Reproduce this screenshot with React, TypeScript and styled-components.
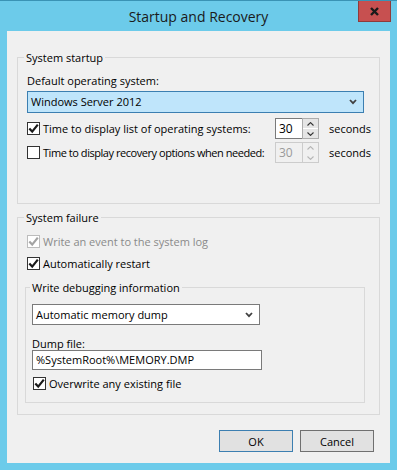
import React from 'react';
import styled, { createGlobalStyle } from 'styled-components';

const Global = createGlobalStyle`
  html, body { margin: 0; padding: 0; background: #6ccbea; }
  body {
    width: 397px; height: 470px; overflow: hidden;
    font-family: "Open Sans", "Noto Sans", sans-serif;
    font-size: 11px; color: #000;
  }
  * { box-sizing: border-box; }
`;

const Window = styled.div`
  width: 397px;
  height: 470px;
  background: #6ccbea;
  border-top: 1px solid #3a93b5;
  display: flex;
  flex-direction: column;
`;

const TitleBar = styled.div`
  height: 30px;
  display: grid;
  grid-template-columns: 1fr auto 1fr;
`;

const Title = styled.div`
  grid-column: 2;
  align-self: center;
  font-size: 14px;
  color: #1a1a1a;
  padding-top: 1px;
`;

const CloseButton = styled.div`
  grid-column: 3;
  justify-self: end;
  align-self: start;
  width: 33px;
  height: 21px;
  margin-right: 6px;
  background: #c75050;
  border: 1px solid #8f3b3b;
  border-top: none;
  display: flex;
  align-items: center;
  justify-content: center;
`;

const Client = styled.div`
  flex: 1;
  margin: 0 7px 7px 7px;
  background: #f0f0f0;
  padding: 19px 10px 0 10px;
  display: flex;
  flex-direction: column;
`;

const Group = styled.fieldset<{ $pad: string; $mt?: number; $stretch?: boolean }>`
  margin: ${p => p.$mt ?? 0}px 0 0 0;
  border: 1px solid #d9d9d9;
  padding: ${p => p.$pad};
  min-width: 0;
  display: flex;
  flex-direction: column;
  align-items: flex-start;
  ${p => (p.$stretch ? 'align-self: stretch;' : '')}
`;

const Legend = styled.legend<{ $ml: number }>`
  padding: 0 2px;
  margin-left: ${p => p.$ml}px;
  line-height: 15px;
  font-size: 11px;
`;

const FieldLabel = styled.div<{ $mt: number; $lh: number }>`
  margin-top: ${p => p.$mt}px;
  line-height: ${p => p.$lh}px;
`;

const Combo = styled.div<{ $focus?: boolean; $w: number; $h: number; $mt: number }>`
  margin-top: ${p => p.$mt}px;
  width: ${p => p.$w}px;
  height: ${p => p.$h}px;
  background: ${p => (p.$focus ? '#bfe5fb' : '#ffffff')};
  border: 1px solid ${p => (p.$focus ? '#3c7fb1' : '#7a7a7a')};
  display: flex;
  align-items: center;
  justify-content: space-between;
  padding: 0 6px 0 3px;
  line-height: 16px;
`;

const CheckRow = styled.div<{ $mt?: number; $disabled?: boolean; $w?: number; $ml?: number }>`
  margin-top: ${p => p.$mt ?? 0}px;
  margin-left: ${p => p.$ml ?? 0}px;
  height: 17px;
  display: flex;
  align-items: center;
  gap: 3px;
  color: ${p => (p.$disabled ? '#8a8a8a' : '#000')};
  ${p => (p.$w ? `flex: 0 0 ${p.$w}px; min-width: 0;` : '')}
  white-space: nowrap;
`;

const CheckText = styled.span<{ $tight?: boolean }>`
  letter-spacing: ${p => (p.$tight ? '-0.45px' : 'normal')};
`;

const Box = styled.span<{ $disabled?: boolean }>`
  width: 13px;
  height: 13px;
  flex: 0 0 13px;
  background: #fff;
  border: 1px solid ${p => (p.$disabled ? '#bcbcbc' : '#333333')};
  display: flex;
  align-items: center;
  justify-content: center;
`;

const SpinRow = styled.div<{ $mt: number }>`
  margin-top: ${p => p.$mt}px;
  height: 21px;
  display: flex;
  align-items: center;
`;

const SpinInput = styled.div<{ $disabled?: boolean }>`
  width: 27px;
  height: 21px;
  background: ${p => (p.$disabled ? '#f0f0f0' : '#fff')};
  border: 1px solid ${p => (p.$disabled ? '#cccccc' : '#7a7a7a')};
  border-right: none;
  color: ${p => (p.$disabled ? '#9a9a9a' : '#000')};
  padding-left: 3px;
  line-height: 19px;
  font-size: 12px;
`;

const SpinButtons = styled.div<{ $disabled?: boolean }>`
  width: 17px;
  height: 21px;
  display: flex;
  flex-direction: column;
  border: 1px solid ${p => (p.$disabled ? '#cccccc' : '#acacac')};
  background: ${p => (p.$disabled ? '#f0f0f0' : '#fff')};
`;

const SpinHalf = styled.div<{ $disabled?: boolean; $top?: boolean }>`
  flex: 1;
  margin: ${p => (p.$top ? '0 0 1px 0' : '0')};
  background: ${p => (p.$disabled ? '#f0f0f0' : '#e5e5e5')};
  display: flex;
  align-items: center;
  justify-content: center;
`;

const Seconds = styled.span`
  margin-left: 10px;
`;

const TextBox = styled.div<{ $w: number; $h: number }>`
  width: ${p => p.$w}px;
  height: ${p => p.$h}px;
  background: #fff;
  border: 1px solid #7a7a7a;
  padding-left: 3px;
  line-height: 18px;
`;

const ButtonBar = styled.div`
  margin-top: 15px;
  padding-right: 6px;
  display: flex;
  justify-content: flex-end;
  gap: 7px;
`;

const Button = styled.div<{ $default?: boolean }>`
  width: 74px;
  height: 22px;
  background: #e1e1e1;
  border: 1px solid ${p => (p.$default ? '#3c7fb1' : '#707070')};
  display: flex;
  align-items: center;
  justify-content: center;
`;

const Check = ({ color }: { color: string }) => (
  <svg width="11" height="11" viewBox="0 0 11 11">
    <path d="M1.3 5.6 L4.2 8.6 L9.8 1.6" fill="none" stroke={color} strokeWidth="2.2" />
  </svg>
);

const CheckBox = ({ checked, disabled }: { checked?: boolean; disabled?: boolean }) => (
  <Box $disabled={disabled}>{checked && <Check color={disabled ? '#a3a3a3' : '#1a1a1a'} />}</Box>
);

const ChevronDown = () => (
  <svg width="8" height="6" viewBox="0 0 8 6">
    <path d="M1 1 L4 4.2 L7 1" fill="none" stroke="#404040" strokeWidth="1.8" />
  </svg>
);

const Arrow = ({ up, color }: { up?: boolean; color: string }) => (
  <svg width="7" height="4" viewBox="0 0 7 4">
    <path d={up ? 'M0.5 3.5 L3.5 0.6 L6.5 3.5' : 'M0.5 0.5 L3.5 3.4 L6.5 0.5'} fill="none" stroke={color} strokeWidth="1.1" />
  </svg>
);

const Spin = ({ value, disabled }: { value: string; disabled?: boolean }) => (
  <>
    <SpinInput $disabled={disabled}>{value}</SpinInput>
    <SpinButtons $disabled={disabled}>
      <SpinHalf $top $disabled={disabled}>
        <Arrow up color={disabled ? '#b5b5b5' : '#333'} />
      </SpinHalf>
      <SpinHalf $disabled={disabled}>
        <Arrow color={disabled ? '#b5b5b5' : '#333'} />
      </SpinHalf>
    </SpinButtons>
  </>
);

export default function App() {
  return (
    <>
      <Global />
      <Window>
        <TitleBar>
          <Title>Startup and Recovery</Title>
          <CloseButton>
            <svg width="9" height="9" viewBox="0 0 9 9">
              <path d="M1 1 L8 8 M8 1 L1 8" stroke="#1a1a1a" strokeWidth="2.4" />
            </svg>
          </CloseButton>
        </TitleBar>
        <Client>
          <Group $pad="0 15px 40px 9px">
            <Legend $ml={-3}>System startup</Legend>
            <FieldLabel $mt={8} $lh={16}>Default operating system:</FieldLabel>
            <Combo $focus $w={337} $h={22} $mt={2}>
              <span>Windows Server 2012</span>
              <ChevronDown />
            </Combo>
            <SpinRow $mt={5}>
              <CheckRow $w={248}>
                <CheckBox checked />
                <CheckText>Time to display list of operating systems:</CheckText>
              </CheckRow>
              <Spin value="30" />
              <Seconds>seconds</Seconds>
            </SpinRow>
            <SpinRow $mt={3}>
              <CheckRow $w={248}>
                <CheckBox />
                <CheckText $tight>Time to display recovery options when needed:</CheckText>
              </CheckRow>
              <Spin value="30" disabled />
              <Seconds>seconds</Seconds>
            </SpinRow>
          </Group>

          <Group $pad="0 14px 11px 7px" $mt={6}>
            <Legend $ml={-1}>System failure</Legend>
            <CheckRow $mt={8} $ml={2} $disabled>
              <CheckBox checked disabled />
              <CheckText>Write an event to the system log</CheckText>
            </CheckRow>
            <CheckRow $mt={5} $ml={2}>
              <CheckBox checked />
              <CheckText>Automatically restart</CheckText>
            </CheckRow>
            <Group $pad="0 0 10px 6px" $mt={8} $stretch>
              <Legend $ml={-2}>Write debugging information</Legend>
              <Combo $w={228} $h={21} $mt={9}>
                <span>Automatic memory dump</span>
                <ChevronDown />
              </Combo>
              <FieldLabel $mt={12} $lh={13}>Dump file:</FieldLabel>
              <TextBox $w={230} $h={20}>%SystemRoot%\MEMORY.DMP</TextBox>
              <CheckRow $mt={5} $ml={1}>
                <CheckBox checked />
                <CheckText>Overwrite any existing file</CheckText>
              </CheckRow>
            </Group>
          </Group>

          <ButtonBar>
            <Button $default>OK</Button>
            <Button>Cancel</Button>
          </ButtonBar>
        </Client>
      </Window>
    </>
  );
}
